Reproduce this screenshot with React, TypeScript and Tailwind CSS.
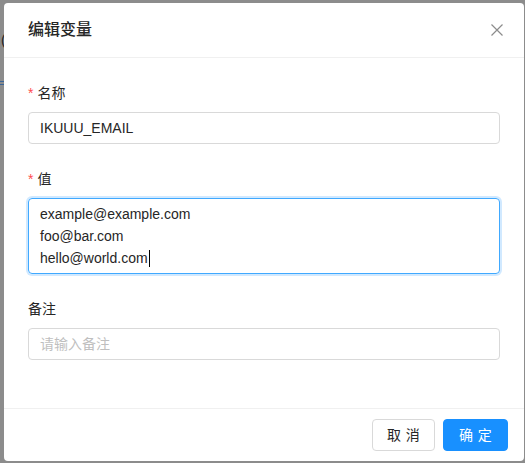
const font = "font-['Liberation_Sans','Noto_Sans_CJK_SC',sans-serif]";

function Label({ text, required }: { text: string; required?: boolean }) {
  return (
    <div className="pb-2 text-sm leading-[22px] text-[#262626]">
      {required && <span className="mr-1 text-[#ff4d4f]">*</span>}
      {text}
    </div>
  );
}

function CloseIcon() {
  return (
    <svg width="12" height="12" viewBox="0 0 12 12" fill="none" stroke="#8c8c8c" strokeWidth="1.2">
      <path d="M0.5 0.5 L11.5 11.5 M11.5 0.5 L0.5 11.5" />
    </svg>
  );
}

export default function App() {
  return (
    <div className={`min-h-screen bg-[#8c8c8c] flex ${font}`}>
      {/* page behind the mask */}
      <div className="w-1 overflow-hidden flex flex-col">
        <span className="mt-[32px] text-sm leading-[16px] text-[#1f1f1f] ml-px">(</span>
        <div className="mt-[33px] h-1 border-y border-[#3b6598]" />
      </div>

      <div className="mt-[3px] w-[520px] self-start bg-white rounded-sm flex flex-col">
        <div className="flex items-center h-[55px] border-b border-[#f0f0f0]">
          <h2 className="pl-6 text-base leading-[22px] font-medium text-[#262626]">编辑变量</h2>
          <button className="ml-auto w-[54px] h-[54px] flex items-center justify-center">
            <CloseIcon />
          </button>
        </div>

        <div className="p-6">
          <div className="mb-6">
            <Label text="名称" required />
            <div className="h-8 border border-[#d9d9d9] rounded-sm px-[11px] flex items-center text-sm text-[#262626]">
              IKUUU_EMAIL
            </div>
          </div>

          <div className="mb-6">
            <Label text="值" required />
            <div className="h-[76px] border border-[#40a9ff] rounded-sm shadow-[0_0_0_2px_rgba(24,144,255,0.2)] px-[11px] py-1 text-sm leading-[22px] text-[#262626]">
              <div>example@example.com</div>
              <div>foo@bar.com</div>
              <div className="flex items-center">
                hello@world.com
                <span className="ml-px w-px h-[17px] bg-black" />
              </div>
            </div>
          </div>

          <div className="mb-6">
            <Label text="备注" />
            <div className="h-8 border border-[#d9d9d9] rounded-sm px-[11px] flex items-center text-sm text-[#bfbfbf]">
              请输入备注
            </div>
          </div>
        </div>

        <div className="border-t border-[#f0f0f0] px-4 py-2.5 flex justify-end gap-2">
          <button className="h-8 w-[63px] shrink-0 whitespace-nowrap flex items-center justify-center border border-[#d9d9d9] rounded-sm text-sm text-[#262626] bg-white">
            <span className="tracking-[0.34em] -mr-[0.34em]">取消</span>
          </button>
          <button className="h-8 w-[65px] shrink-0 whitespace-nowrap flex items-center justify-center border border-[#1890ff] rounded-sm text-sm text-white bg-[#1890ff]">
            <span className="tracking-[0.34em] -mr-[0.34em]">确定</span>
          </button>
        </div>
      </div>
    </div>
  );
}
